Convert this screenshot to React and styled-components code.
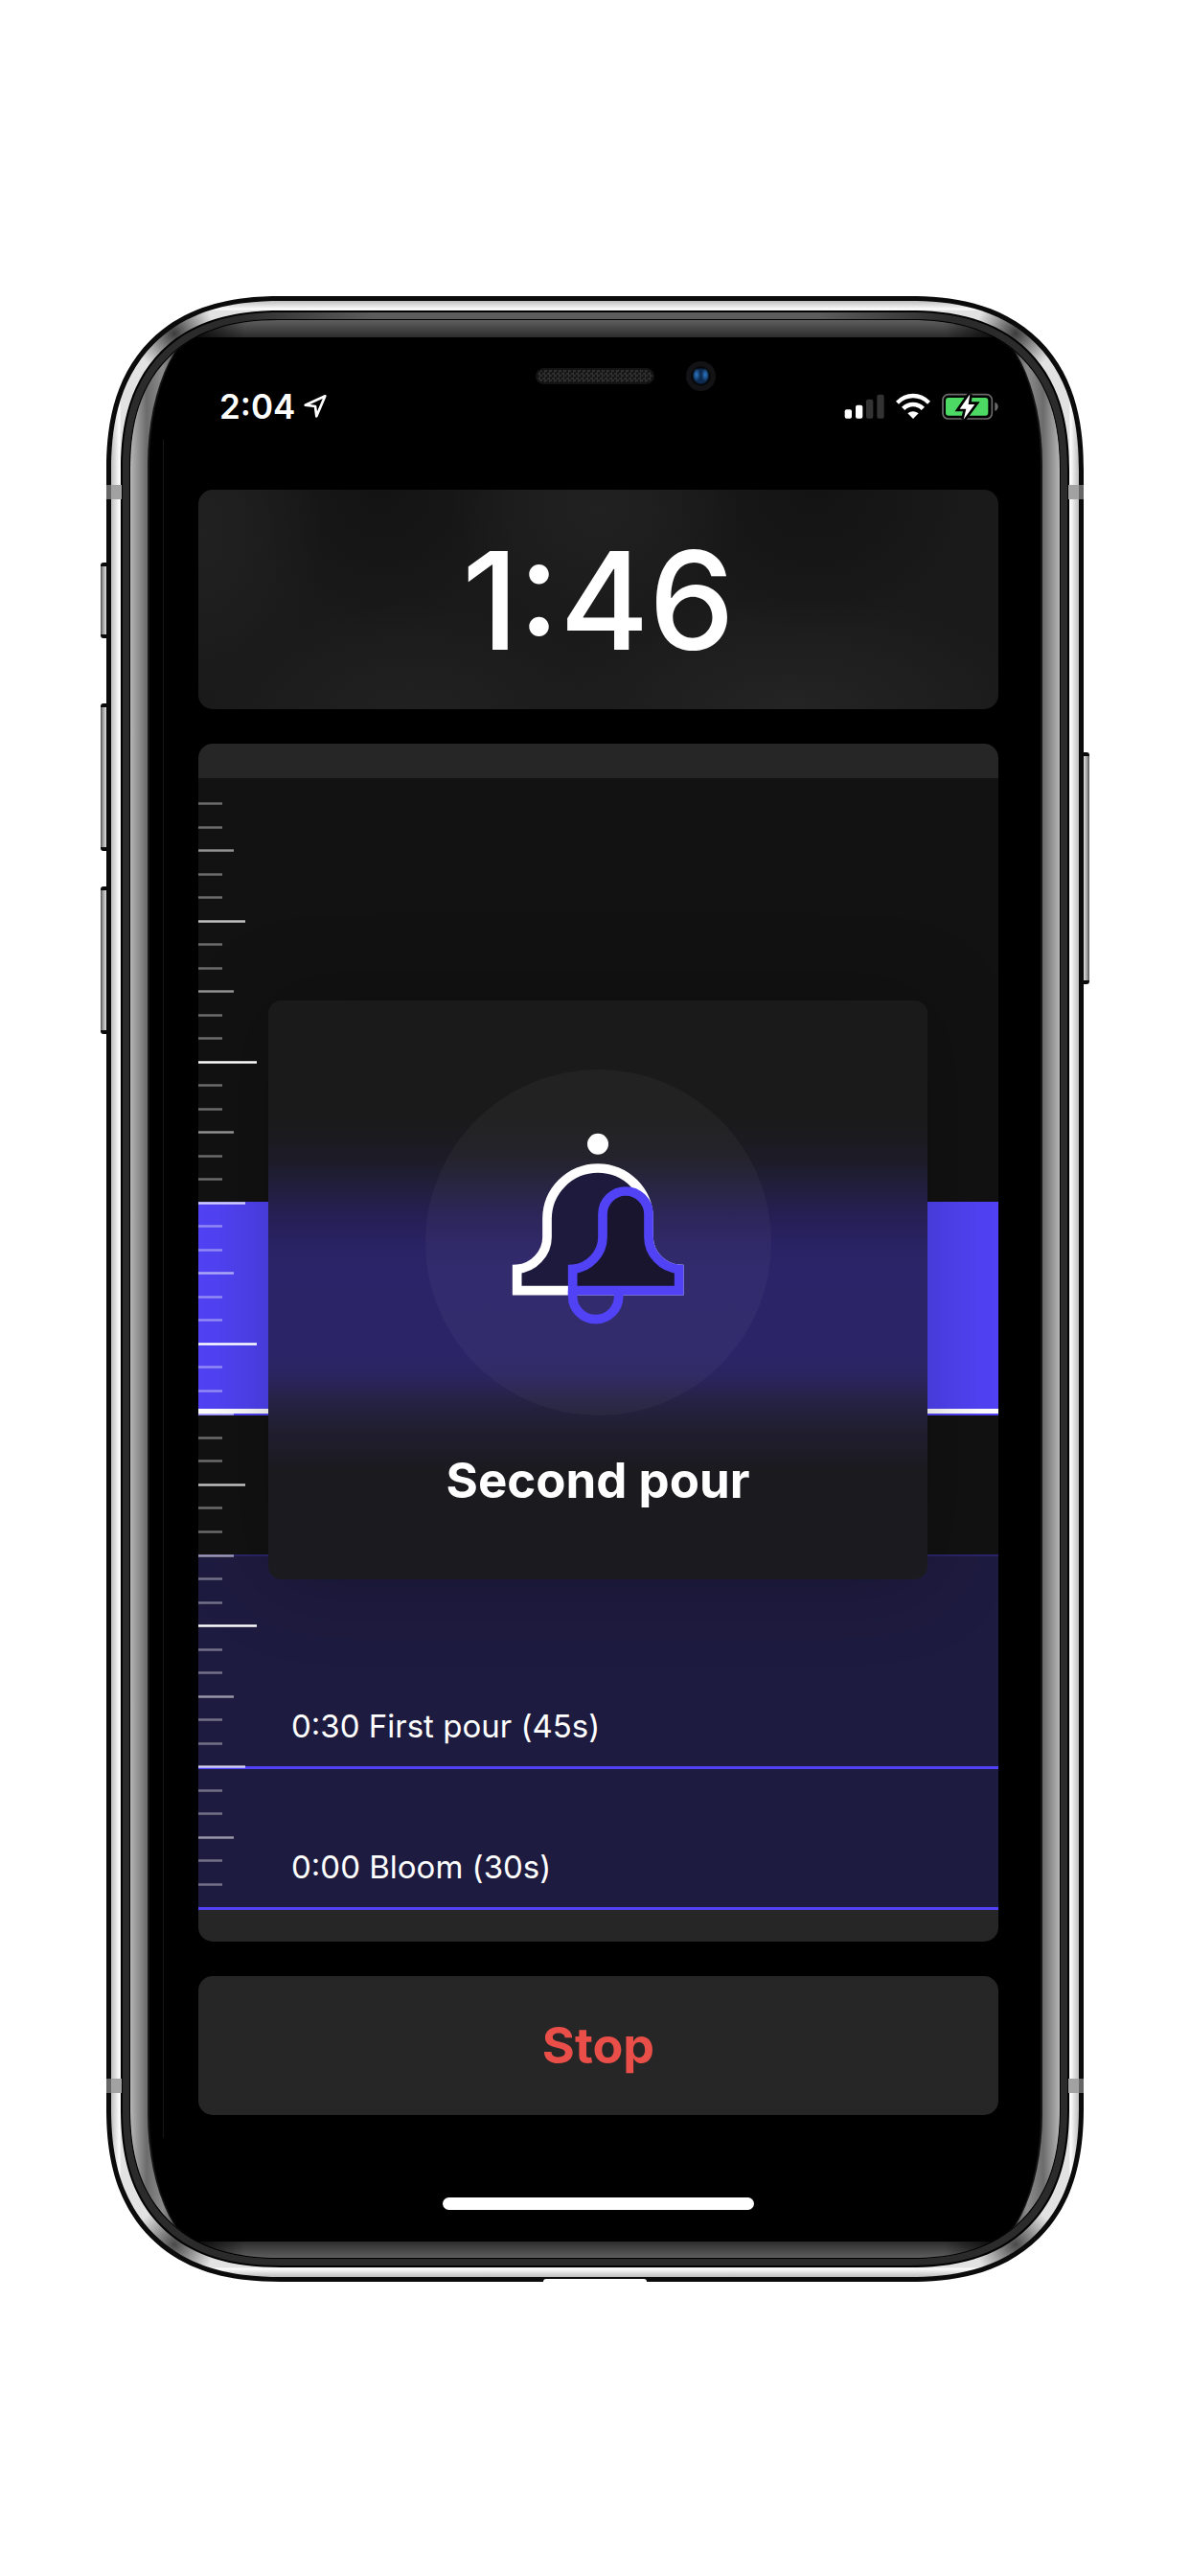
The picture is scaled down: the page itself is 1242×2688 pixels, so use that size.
import React from "react";
import styled, { createGlobalStyle, css } from "styled-components";

const GlobalStyle = createGlobalStyle`
  *, *::before, *::after { box-sizing: border-box; }
  body {
    margin: 0;
    background: #fff;
    color: #fff;
    font-family: Inter, "Liberation Sans", sans-serif;
  }
`;

const accent = "#5143f5";

/* ---------- device ---------- */

/* Continuous corner where the browser has it, a plain round one elsewhere. */
const deviceCorner = (inset) => css`
  border-radius: ${162 - inset}px;
  @supports (corner-shape: superellipse(1.25)) {
    border-radius: ${182 - inset}px;
    corner-shape: superellipse(1.25);
  }
`;

const Page = styled.main`
  min-height: 100vh;
  display: flex;
  justify-content: center;
  align-items: flex-start;
  padding: 309px 111px 306px;
`;

const Phone = styled.div`
  position: relative;
  flex: 1;
  max-width: 1020px;
`;

const Shell = styled.div`
  position: relative;
  padding: 5px;
  ${deviceCorner(0)}
  background: #0b0b0b;
`;

const Metal = styled.div`
  padding: 10px;
  ${deviceCorner(5)}
  background:
    radial-gradient(circle at 66px 34px, #3c3c3c 0, transparent 42px),
    radial-gradient(circle at calc(100% - 66px) 34px, #3c3c3c 0, transparent 42px),
    radial-gradient(circle at 66px calc(100% - 34px), #4a4a4a 0, transparent 42px),
    radial-gradient(circle at calc(100% - 66px) calc(100% - 34px), #4a4a4a 0, transparent 42px),
    linear-gradient(90deg, #bdbdbd, #fff 9px, transparent 10px),
    linear-gradient(270deg, #bdbdbd, #fff 9px, transparent 10px),
    linear-gradient(#bdbdbd, #fff 9px, #e2e2e2 10px, #e2e2e2 calc(100% - 10px), #fff calc(100% - 9px), #bdbdbd);
`;

const Gasket = styled.div`
  padding: 2px;
  ${deviceCorner(15)}
  background: #020202;
`;

const Ring = styled.div`
  padding: 7px;
  ${deviceCorner(17)}
  background:
    linear-gradient(90deg, #2b2b2b 120px, #5c5c5c 260px, #5c5c5c calc(100% - 260px), #2b2b2b calc(100% - 120px)) top / 100% 7px no-repeat,
    #2b2b2b;
`;

const Glass = styled.div`
  overflow: hidden;
  border: 1px solid #000;
  ${deviceCorner(24)}
  background:
    linear-gradient(90deg, #b6b6b6, #6c6c6c 17px, #8c8c8c 34px, transparent 68px),
    linear-gradient(270deg, #b6b6b6, #6c6c6c 17px, #8c8c8c 34px, transparent 68px),
    #000;
`;

const Display = styled.div`
  margin: 0 18px;
  border: solid #161616;
  border-width: 0 2px;
  border-radius: 76px / 150px;
  background: linear-gradient(#161616, #161616) 14px 50% / 1px calc(100% - 250px) no-repeat, #000;
`;

const Glow = styled.div`
  height: ${(p) => (p.$bottom ? 17 : 18)}px;
  margin: 0 30px;
  background: linear-gradient(${(p) => (p.$bottom ? "0deg" : "180deg")}, #5e5e5e, #2c2c2c);
  mask-image: linear-gradient(90deg, transparent, #000 70px, #000 calc(100% - 70px), transparent);
`;

const Antenna = styled.span`
  position: absolute;
  ${(p) => p.$side}: 0;
  ${(p) => (p.$low ? "bottom: 197px" : "top: 197px")};
  width: 16px;
  height: 15px;
  background: linear-gradient(${(p) => (p.$side === "left" ? "90deg" : "270deg")}, #666 5px, #a2a2a2 5px);
`;

const Port = styled.span`
  position: absolute;
  bottom: 0;
  left: calc(50% - 54px);
  width: 108px;
  height: 3px;
  border-radius: 3px 3px 0 0;
  background: #fff;
`;

const SideKey = styled.span`
  position: absolute;
  ${(p) => p.$side}: -6px;
  top: ${(p) => p.$top}px;
  width: 10px;
  height: ${(p) => p.$length}px;
  border: solid #0b0b0b;
  border-width: 4px 0;
  border-radius: ${(p) => (p.$side === "left" ? "3px 0 0 3px" : "0 3px 3px 0")};
  background: linear-gradient(${(p) => (p.$side === "left" ? "90deg" : "270deg")}, #555, #aaa 3px, #ddd 6px);
`;

const Sensors = styled.div`
  display: grid;
  grid-template-columns: 1fr 124px 1fr;
  align-items: center;
  height: 32px;
  margin-top: 24px;
`;

const Speaker = styled.span`
  grid-column: 2;
  height: 17px;
  border: 2px solid #131313;
  border-radius: 9px;
  background: repeating-conic-gradient(#2e2e2e 0 25%, #161616 0 50%) 0 0 / 5px 5px;
`;

const Camera = styled.span`
  width: 31px;
  height: 31px;
  margin-left: 33px;
  border-radius: 50%;
  background:
    radial-gradient(ellipse 4px 7px at 11px 14px, #2c78c4, transparent),
    radial-gradient(ellipse 4px 7px at 20px 14px, #2c78c4, transparent),
    radial-gradient(circle, #0d2b50 7px, #040506 9px, #131315 11px);
`;

/* ---------- app ---------- */

const Content = styled.div`
  display: flex;
  flex-direction: column;
  gap: 36px;
  padding: 0 44px 0 51px;
`;

const StatusBar = styled.header`
  display: flex;
  align-items: center;
  gap: 8px;
  height: 32px;
  margin-bottom: 35px;
  padding-left: 22px;
`;

const Clock = styled.time`
  font-size: 35px;
  font-weight: 600;
  line-height: 32px;
`;

const Indicators = styled.div`
  display: flex;
  align-items: center;
  gap: 12px;
  margin-left: auto;
`;

const Card = styled.section`
  border-radius: 15px;
  overflow: hidden;
`;

const TimerCard = styled(Card)`
  display: grid;
  place-items: center;
  height: 229px;
  font-size: 142px;
  font-weight: 500;
  line-height: 1;
  background:
    radial-gradient(ellipse 130px 170px at 0 20%, #212121, transparent),
    radial-gradient(ellipse 150px 130px at 50% 8%, #212121, transparent),
    radial-gradient(ellipse 150px 150px at 23% 0, #131313, transparent),
    radial-gradient(ellipse 170px 150px at 77% 0, #131313, transparent),
    radial-gradient(ellipse 220px 110px at 27% 100%, #212121, transparent),
    radial-gradient(ellipse 260px 120px at 74% 100%, #242424, transparent),
    #1a1a1a;
`;

const ChartCard = styled(Card)`
  padding: 36px 0 33px;
  background: #262626;
`;

const Chart = styled.div`
  display: grid;
  height: 1181px;
  background: #121212;
  > * { grid-area: 1 / 1; }
`;

const Timeline = styled.ol`
  display: flex;
  flex-direction: column;
  justify-content: flex-end;
  margin: 0;
  padding: 0;
  list-style: none;
`;

const Step = styled.li`
  display: flex;
  flex-direction: column;
  justify-content: flex-end;
  height: ${(p) => p.$height}px;
  padding: 0 0 20px 97px;
  border-bottom: 3px solid ${accent};
  background: #1e1b40;
  font-size: 33px;
  line-height: 44px;
  box-shadow: inset 0 2px ${(p) => (p.$edge ? "#2b2468" : "transparent")};
`;

const ActiveStep = styled.li`
  display: flex;
  align-items: flex-end;
  height: 223px;
  margin-bottom: 145px;
  padding-bottom: 2px;
  background: ${accent};
`;

const Playhead = styled.span`
  flex: 1;
  height: 5px;
  background: #fff;
`;

const Ruler = styled.div`
  display: flex;
  flex-direction: column;
  justify-content: space-between;
  padding: 25px 0;
  z-index: 1;
`;

const Tick = styled.span`
  height: 3px;
  width: ${(p) => p.$width}px;
  background: linear-gradient(rgba(255, 255, 255, 0.6), #fff, rgba(255, 255, 255, 0.6));
  opacity: ${(p) => p.$opacity};
`;

const StopButton = styled.button`
  height: 145px;
  border: 0;
  border-radius: 15px;
  background: #262626;
  color: #ea4e49;
  font: inherit;
  font-size: 52px;
  font-weight: 700;
`;

const HomeBar = styled.div`
  align-self: center;
  width: 325px;
  height: 13px;
  margin: 50px 0 33px;
  border-radius: 7px;
  background: #fff;
`;

const Overlay = styled.div`
  position: absolute;
  inset: 0;
  display: grid;
  place-items: center;
  padding: 2px 0 0 6px;
`;

const Alert = styled.div`
  display: flex;
  flex-direction: column;
  align-items: center;
  gap: 36px;
  width: 688px;
  height: 604px;
  padding-top: 72px;
  border-radius: 14px;
  box-shadow: 0 0 90px rgba(0, 0, 0, 0.24);
  background: linear-gradient(
    #1a1a1a 0, #1a1a1b 124px, #1d1b25 164px, #211f3e 196px, #251f54 224px,
    #292262 252px, #2b2468 282px, #2b2567 370px, #2a2560 391px, #262246 416px,
    #201e30 446px, #1b1a1f 490px, #1b1b1f 604px
  );
`;

const Badge = styled.div`
  display: flex;
  justify-content: center;
  align-items: flex-start;
  width: 361px;
  height: 361px;
  padding-top: 65px;
  border-radius: 50%;
  background: rgba(255, 255, 255, 0.035);
`;

const AlertTitle = styled.h1`
  margin: 0;
  font-size: 51px;
  font-weight: 700;
  line-height: 64px;
`;

/* ---------- drawings ---------- */

const LocationIcon = () => (
  <svg width="26" height="26" viewBox="676 364 78 78" fill="none" stroke="#fff" strokeWidth="8" strokeLinejoin="round">
    <path d="M746 371 684 399 715 403 719 434Z" />
  </svg>
);

const SignalIcon = () => (
  <svg width="42" height="28" viewBox="422 361 126 84" fill="#fff">
    <rect x="424" y="413" width="22" height="28" rx="6" />
    <rect x="458" y="399" width="22" height="42" rx="6" />
    <rect x="491" y="381" width="22" height="60" rx="6" fill="#333" />
    <rect x="525" y="366" width="22" height="75" rx="6" fill="#333" />
  </svg>
);

const WifiIcon = () => (
  <svg width="36" height="28" viewBox="585 361 108 84" fill="#fff">
    <path d="M585 387Q608 363 639 363T693 387L684 396Q664 377 639 377T594 396Z" />
    <path d="M603 405Q619 390 639 390T675 405L665 415Q653 404 639 404T613 415Z" />
    <path d="M622 425Q638 412 656 425L639 442Z" />
  </svg>
);

const BatteryIcon = () => (
  <svg width="59" height="28" viewBox="731 361 177 84">
    <rect x="734" y="366" width="154" height="76" rx="17" fill="none" stroke="#6b6b6b" strokeWidth="5" />
    <path d="M897 390Q907 394 907 404T897 418Z" fill="#6b6b6b" />
    <rect x="743" y="376" width="133" height="56" rx="9" fill="#4cd964" />
    <path d="M819 365 787 411H807L799 444 834 397H814Z" fill="#fff" stroke="#000" strokeWidth="16" />
    <path d="M819 365 787 411H807L799 444 834 397H814Z" fill="#fff" />
  </svg>
);

const BellIcon = () => (
  <svg width="180" height="202" viewBox="103 305 540 606" fill="none" strokeWidth="29" strokeMiterlimit="10">
    <circle cx="373" cy="343" r="33" fill="#fff" />
    <path
      d="M120 802V735C172 731 214 686 214 635V578A159 159 0 0 1 532 578V635C532 686 574 731 627 735V802Z"
      fill="#1d1a3e"
      stroke="#fff"
    />
    <path d="M294 802V820A72 72 0 0 0 438 820V802" stroke={accent} />
    <path
      d="M294 802V735C346 731 388 686 388 635V563A72 72 0 0 1 532 563V635C532 686 574 731 627 735V802Z"
      fill="#19152f"
      stroke={accent}
    />
  </svg>
);

const tickStyle = (step) => {
  if (step % 12 === 0) return { $width: 61, $opacity: 1 };
  if (step % 6 === 0) return { $width: 49, $opacity: 0.74 };
  if (step % 3 === 0) return { $width: 37, $opacity: 0.54 };
  return { $width: 25, $opacity: 0.38 };
};

const steps = Array.from({ length: 47 }, (_, i) => 47 - i);

export default function App() {
  return (
    <Page>
      <GlobalStyle />
      <Phone>
        <SideKey $side="left" $top={278} $length={79} />
        <SideKey $side="left" $top={425} $length={154} />
        <SideKey $side="left" $top={616} $length={154} />
        <SideKey $side="right" $top={476} $length={242} />
        <Shell>
          <Metal>
            <Gasket>
              <Ring>
                <Glass>
                  <Display>
                    <Glow />
                    <Sensors>
                      <Speaker />
                      <Camera />
                    </Sensors>
                    <Content>
                      <StatusBar>
                        <Clock>2:04</Clock>
                        <LocationIcon />
                        <Indicators>
                          <SignalIcon />
                          <WifiIcon />
                          <BatteryIcon />
                        </Indicators>
                      </StatusBar>
                      <TimerCard>
                        <time>1:46</time>
                      </TimerCard>
                      <ChartCard>
                        <Chart>
                          <Timeline>
                            <ActiveStep>
                              <Playhead />
                            </ActiveStep>
                            <Step $height={224} $edge>0:30 First pour (45s)</Step>
                            <Step $height={147}>0:00 Bloom (30s)</Step>
                          </Timeline>
                          <Ruler>
                            {steps.map((step) => (
                              <Tick key={step} {...tickStyle(step)} />
                            ))}
                          </Ruler>
                        </Chart>
                      </ChartCard>
                      <StopButton type="button">Stop</StopButton>
                      <HomeBar />
                    </Content>
                    <Glow $bottom />
                  </Display>
                </Glass>
              </Ring>
            </Gasket>
          </Metal>
          <Antenna $side="left" />
          <Antenna $side="right" />
          <Antenna $side="left" $low />
          <Antenna $side="right" $low />
          <Port />
        </Shell>
        <Overlay>
          <Alert role="alertdialog" aria-labelledby="alert-title">
            <Badge>
              <BellIcon />
            </Badge>
            <AlertTitle id="alert-title">Second pour</AlertTitle>
          </Alert>
        </Overlay>
      </Phone>
    </Page>
  );
}
